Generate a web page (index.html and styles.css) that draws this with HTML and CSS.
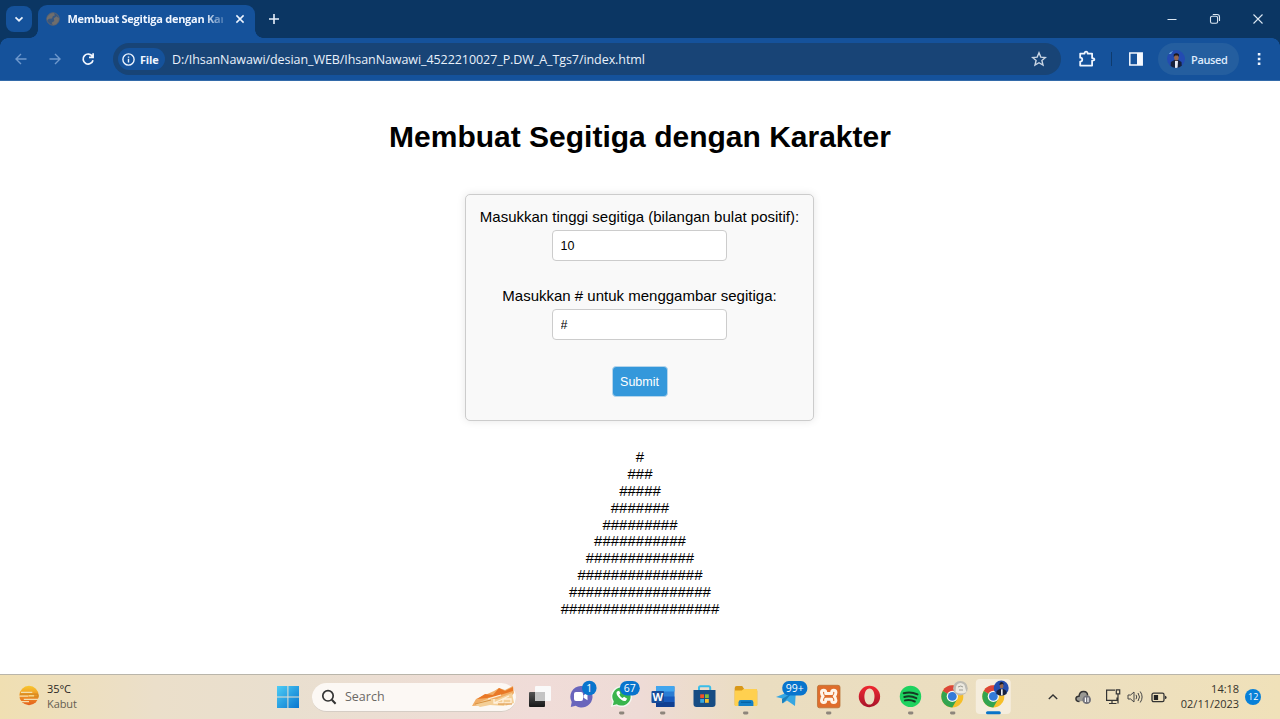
FILE: index.html
```html
<!DOCTYPE html>
<html lang="id">
<head>
<meta charset="utf-8">
<title>Membuat Segitiga dengan Karakter</title>
<link rel="stylesheet" href="styles.css">
</head>
<body>
<div class="screen">
  <header class="tabstrip">
    <div class="tab-search"><svg width="26" height="26" viewBox="0 0 26 26"><path d="M9.5 11.3l3.5 3.4 3.5-3.4" fill="none" stroke="#e8f0fb" stroke-width="1.7"/></svg></div>
    <div class="tab">
      <svg class="favicon" width="14" height="14" viewBox="0 0 14 14"><circle cx="7" cy="7" r="6.2" fill="#385780" stroke="#65656b" stroke-width="1"/><path d="M2 4Q4 .8 7.6 1L9 3.2 6.8 4.3 6 6.5 3 6.8 1.2 8.2.8 6zM7.8 6.2l2.8-2 2.5 2.2-.6 3-2.5 3-3.2.7-1.1-2.4 2.6-1.6z" fill="#706e6d"/></svg>
      <span class="tab-title">Membuat Segitiga dengan Kar</span>
      <svg class="tab-close" width="10" height="10" viewBox="0 0 10 10"><path d="M1.4 1.4l7.2 7.2M8.6 1.4L1.4 8.6" stroke="#edf4ff" stroke-width="1.5"/></svg>
    </div>
    <svg class="new-tab" width="12" height="12" viewBox="0 0 12 12"><path d="M6 1v10M1 6h10" stroke="#e8f0fa" stroke-width="1.6"/></svg>
    <div class="window-controls">
      <svg width="12" height="12" viewBox="0 0 12 12"><path d="M1.5 6.5h9" stroke="#dce7f2"/></svg>
      <svg width="12" height="12" viewBox="0 0 12 12"><rect x="1.5" y="3.2" width="7.1" height="7.1" rx="1.6" fill="none" stroke="#dce7f2" stroke-width="1.1"/><path d="M3.8 1.5h4.3q2.4 0 2.4 2.4v4.2" fill="none" stroke="#dce7f2" stroke-width="1.1"/></svg>
      <svg width="12" height="12" viewBox="0 0 12 12"><path d="M1.5 1.5l9 9M10.5 1.5l-9 9" stroke="#dce7f2" stroke-width="1.1"/></svg>
    </div>
  </header>

  <nav class="toolbar">
    <div class="nav-buttons">
      <svg width="14" height="14" viewBox="0 0 14 14"><path d="M12.5 7H2.2M7 2L2 7l5 5" fill="none" stroke="#6f99cd" stroke-width="1.4"/></svg>
      <svg width="14" height="14" viewBox="0 0 14 14"><path d="M1.5 7h10.3M7 2l5 5-5 5" fill="none" stroke="#6f99cd" stroke-width="1.4"/></svg>
      <svg width="14" height="14" viewBox="0 0 14 14"><path d="M11.4 4.4A5 5 0 1 0 12 8.2M12.1 1.2v4.1H8" fill="none" stroke="#f4f8ff" stroke-width="1.7"/></svg>
    </div>
    <div class="omnibox">
      <div class="file-chip"><svg width="13" height="13" viewBox="0 0 13 13"><circle cx="6.5" cy="6.5" r="5.6" fill="none" stroke="#eef5ff" stroke-width="1.4"/><path d="M6.5 5.8v3.6M6.5 3.4v1.3" stroke="#eef5ff" stroke-width="1.4"/></svg><span>File</span></div>
      <span class="url">D:/IhsanNawawi/desian_WEB/IhsanNawawi_4522210027_P.DW_A_Tgs7/index.html</span>
      <svg class="star" width="16" height="16" viewBox="0 0 16 16"><path d="M8 1.8l1.8 4.3 4.6.4-3.5 3 1.1 4.6L8 11.7 4 14.1l1.1-4.6-3.5-3 4.6-.4z" fill="none" stroke="#c9d5e3" stroke-width="1.4"/></svg>
    </div>
    <svg class="puzzle" width="18" height="18" viewBox="0 0 18 18"><path d="M2.2 3.6h4.4C6.3 1 9.9 1 9.6 3.6h4.5v4.5c3-.3 3 2.9 0 2.6v4.9H2.2v-4c2.6-.1 2.9-3.7 0-3.9z" fill="none" stroke="#f0f6ff" stroke-width="1.8" stroke-linejoin="round"/></svg>
    <i class="separator"></i>
    <svg class="side-panel" width="14" height="14" viewBox="0 0 14 14"><rect x=".8" y="1" width="12.4" height="12" fill="none" stroke="#f5f9ff" stroke-width="1.5"/><path d="M8 1h5.2v12H8z" fill="#f5f9ff"/></svg>
    <div class="profile">
      <svg width="18" height="18" viewBox="0 0 18 18"><defs><clipPath id="face"><circle cx="9" cy="9" r="9"/></clipPath></defs><g clip-path="url(#face)"><path fill="#234bb2" d="M0 0h18v18H0z"/><path d="M1 4q2-3 5-3L4 4z" fill="#68a4db"/><path d="M3.5 18l.4-6L7.3 10h3.8l3.4 2 .4 6z" fill="#17213b"/><path d="M8 11h3l-.4 7H8z" fill="#e7eaf4"/><ellipse cx="9.4" cy="7.5" rx="2.3" ry="3.1" fill="#95664f"/><path d="M6.7 7V4.5Q9.4 2 12 4.5V7l-1-1.6H8z" fill="#1c1820"/></g></svg>
      <span>Paused</span>
    </div>
    <svg class="menu" width="6" height="16" viewBox="0 0 6 16"><path d="M1.8 1.9h2.6v2.6H1.8zM1.8 6.7h2.6v2.6H1.8zM1.8 11.5h2.6v2.6H1.8z" fill="#eef5ff"/></svg>
  </nav>

  <main class="page">
    <h1 class="heading">Membuat Segitiga dengan Karakter</h1>
    <form class="card">
      <label class="label" for="tinggi">Masukkan tinggi segitiga (bilangan bulat positif):</label>
      <input class="field" id="tinggi" type="text" value="10">
      <label class="label" for="karakter">Masukkan # untuk menggambar segitiga:</label>
      <input class="field" id="karakter" type="text" value="#">
      <button class="submit" type="button">Submit</button>
    </form>
    <div class="triangle">#<br>###<br>#####<br>#######<br>#########<br>###########<br>#############<br>###############<br>#################<br>###################</div>
  </main>

  <footer class="taskbar">
    <div class="weather">
      <svg width="24" height="24" viewBox="0 0 24 24"><defs><linearGradient id="sun" x2="0" y2="1"><stop stop-color="#f8c72f"/><stop offset="1" stop-color="#e5601c"/></linearGradient></defs><circle cx="11" cy="10.5" r="9.7" fill="url(#sun)"/><path d="M3 7.4h11.3M0 11.1h10.3M5.8 14.3h15M0 16.7h11" stroke="#f3dfb0" stroke-width="1.3"/><path d="M2 9.1h18M12 11.8h8v-2.4" fill="none" stroke="#d38a22" stroke-width="1.2"/><path d="M10.6 10.8h5.5" stroke="#f9dc8e" stroke-width="1.4"/></svg>
      <div class="weather-text"><span>35°C</span><span class="condition">Kabut</span></div>
    </div>
    <svg class="start" width="22" height="22" viewBox="0 0 22 22"><defs><linearGradient id="win" x2="1" y2="1"><stop stop-color="#4dcdf5"/><stop offset="1" stop-color="#0875cf"/></linearGradient></defs><path d="M0 0h10.4v10.4H0zM11.4 0H22v10.4H11.4zM0 11.4h10.4V22H0zM11.4 11.4H22V22H11.4z" fill="url(#win)"/></svg>
    <div class="search">
      <svg width="16" height="16" viewBox="0 0 16 16"><circle cx="7" cy="6.8" r="5.2" fill="none" stroke="#333" stroke-width="1.7"/><path d="M10.8 10.7l3.8 4" stroke="#333" stroke-width="2"/></svg>
      <span>Search</span>
      <svg class="search-art" width="43" height="22" viewBox="0 0 43 22"><path d="M0 20L4 13 13 9 22 5l5-3 6 2 8-4 1 7-5 6-12 2-9 4z" fill="#f1ad65"/><path d="M5 13l8-5 8 1 6-7 6 3 8-4v4L28 9l-13 3z" fill="#e97826"/><path d="M3 18l12-5 10 0 15-6 2 10-9 3-15-1-10 2z" fill="#f4cf97"/><path d="M16 13l13-4M22 17l15-7M22 13v4h9v-4h8v4h-6v3" fill="none" stroke="#fff1dd" stroke-width="1.3"/><path d="M3 18l16-4M26 18h14" stroke="#d9913f"/></svg>
    </div>
    <div class="apps">
      <svg class="app" viewBox="0 0 41.3 45"><defs><linearGradient id="dark" x2="0" y2="1"><stop stop-color="#555"/><stop offset="1" stop-color="#181818"/></linearGradient></defs><rect x="16" y="12" width="16" height="15" rx="1" fill="#fafafa"/><rect x="10" y="18" width="16" height="15" rx="1" fill="url(#dark)"/><path d="M16 18h10v9H16z" fill="#c4c4c4"/></svg>
      <svg class="app" viewBox="0 0 41.3 45"><path d="M20.7 12a10.7 10.7 0 0 0-9 16l-.9 5 5-1.2A10.8 10.8 0 1 0 20.7 12z" fill="#6965bc"/><rect x="14" y="18" width="9" height="9" rx="2" fill="#fff"/><path d="M23.5 21.2l4-2.4v7.4l-4-2.4z" fill="#fff"/><circle cx="29.3" cy="14" r="7.3" fill="#0874cd"/><text x="29.3" y="18" class="badge">1</text></svg>
      <svg class="app" viewBox="0 0 41.3 45"><path d="M20.3 12a10.5 10.5 0 0 0-9 15.7L9.9 33l5.5-1.4A10.5 10.5 0 1 0 20.3 12z" fill="#f5f7f3"/><path d="M20.3 13.6a9 9 0 0 0-7.5 13.8l-1 3.8 4-1A9 9 0 1 0 20.3 13.6z" fill="#39b54c"/><path d="M16 17.5c-2.5 2.5 4.8 11 8.8 9.2l1.4-2-3.1-2-1.5 1.3q-2.3-.9-3.3-3.4l1.1-1.4-1.3-2.5z" fill="#fff"/><rect x="18.8" y="7" width="20" height="14.5" rx="7.2" fill="#0874cd"/><text x="28.8" y="18" class="badge">67</text><rect x="18" y="37.6" width="5.4" height="2.8" rx="1.4" class="running"/></svg>
      <svg class="app" viewBox="0 0 41.3 45"><rect x="14" y="12" width="18.5" height="21" rx="1.5" fill="#2b7cd3"/><path d="M14 12h18.5v5.5H14z" fill="#41a5ee"/><path d="M14 22.5h18.5V28H14z" fill="#185abd"/><path d="M14 28h18.5v5H14z" fill="#103f91"/><rect x="9.5" y="17" width="12.5" height="12" rx="1" fill="#174c99"/><text x="15.8" y="26.7" class="word">W</text><rect x="18" y="37.6" width="5.4" height="2.8" rx="1.4" class="running"/></svg>
      <svg class="app" viewBox="0 0 41.3 45"><path d="M15 17v-3.3q0-1.5 1.5-1.5h8.2q1.5 0 1.5 1.5V17" fill="none" stroke="#3abde9" stroke-width="2"/><path d="M9.5 16h22v14q0 3-3 3h-16q-3 0-3-3z" fill="#174c83"/><path d="M16.2 20.3h3.8v3.8h-3.8z" fill="#f35225"/><path d="M21 20.3h3.8v3.8H21z" fill="#81bc3a"/><path d="M16.2 25h3.8v3.8h-3.8z" fill="#35a8df"/><path d="M21 25h3.8v3.8H21z" fill="#f8bd2d"/></svg>
      <svg class="app" viewBox="0 0 41.3 45"><path d="M9.7 14q0-2 2-2h5.5l2 3h11q2 0 2 2v14H9.7z" fill="#d99818"/><path d="M9.7 16.5h7l2-1.5H31q1.2 0 1.2 1.2V32H9.7z" fill="#ffd04f"/><path d="M13.5 32v-3.5q0-2.4 2.4-2.4H26q2.4 0 2.4 2.4V32z" fill="#1480c7"/><path d="M16 28.3h10" stroke="#0763a5" stroke-width="1.3"/><rect x="18" y="37.6" width="5.4" height="2.8" rx="1.4" class="running"/></svg>
      <svg class="app" viewBox="0 0 41.3 45"><path d="M10 23l20-8-1 17-8-5.500-4 2.800-.7-4.700z" fill="#35a6e2"/><path d="M16 25l10-6-6.500 7.500-3.400 3z" fill="#1c7fbb"/><rect x="16.300" y="7" width="25" height="14.500" rx="6.500" fill="#0874cd"/><text x="28.800" y="18" class="badge">99+</text></svg>
      <svg class="app" viewBox="0 0 41.3 45"><rect x="9.500" y="11.300" width="22.500" height="22.500" rx="2" fill="#df6d2c" stroke="#b97035" stroke-width=".8"/><path d="M13.500 18.500q0-2.200 2.200-2.200 2 0 2 2v1.200h6v-1.200q0-2 2-2 2.200 0 2.200 2.200 0 2.400-1.600 3.900 1.600 1.500 1.600 3.900 0 2.200-2.200 2.200-2 0-2-2v-1.200h-6v1.200q0 2-2 2-2.200 0-2.200-2.200 0-2.400 1.600-3.900-1.600-1.500-1.600-3.900z" fill="none" stroke="#fff5e9" stroke-width="3" stroke-linejoin="round"/><rect x="18" y="37.600" width="5.400" height="2.800" rx="1.400" class="running"/></svg>
      <svg class="app" viewBox="0 0 41.3 45"><defs><linearGradient id="opera" x2="0" y2="1"><stop stop-color="#ef2931"/><stop offset="1" stop-color="#a81329"/></linearGradient></defs><path fill-rule="evenodd" d="M20.5 11.8a10.7 10.7 0 1 1-.1 21.4 10.7 10.7 0 0 1 .1-21.4m0 2.6c-6.7 0-6.7 16.2 0 16.2s6.7-16.2 0-16.2" fill="url(#opera)"/></svg>
      <svg class="app" viewBox="0 0 41.3 45"><circle cx="20.5" cy="22.4" r="10.7" fill="#1ed25f"/><path d="M13.7 19.2q7-2.1 13.8 1.2M14.3 23q6.2-1.7 12 1.2M15 26.4q5-1.3 9.8 1.1" fill="none" stroke="#153b24" stroke-width="2" stroke-linecap="round"/><rect x="18" y="37.6" width="5.4" height="2.8" rx="1.4" class="running"/></svg>
      <svg class="app" viewBox="0 0 41.3 45"><g id="chrome"><circle cx="20.3" cy="22.4" r="11" fill="#f6bf28"/><path d="M20.3 22.4L10.8 16.9a11 11 0 0 1 19.1 0z" fill="#dc4538"/><path d="M20.3 22.4L10.8 16.9a11 11 0 0 0 9.5 16.5l4.6-8z" fill="#32a450"/><circle cx="20.3" cy="22.4" r="5.6" fill="#f8faf5"/><circle cx="20.3" cy="22.4" r="4.4" fill="#347bd8"/></g><circle cx="28.4" cy="14.2" r="7.3" fill="#bdbbb2"/><path d="M24 13q1-4 5-4 4 1 4 4l1.500 5q-5 3-11 0z" fill="#ece9df"/><path d="M26 13q3-2 5 0M27 16h4" fill="none" stroke="#9b9a90"/><rect x="18" y="37.6" width="5.4" height="2.8" rx="1.4" class="running"/></svg>
      <svg class="app" viewBox="0 0 41.3 45"><rect x="2.8" y="5" width="35" height="35" rx="4" fill="#f5eddd"/><use href="#chrome"/><circle cx="28.2" cy="14" r="7.5" fill="#244eaf"/><path d="M23.5 20v-3l3-2h4l3 2v3q-5 3-10 0z" fill="#17223e"/><ellipse cx="28.6" cy="12" rx="1.9" ry="2.6" fill="#93674f"/><path d="M26.4 11q0-3 2.5-3 2 .3 2 3l-1-1.2z" fill="#181a26"/><path d="M28 15.3h1.7v6H28z" fill="#eee"/><rect x="13" y="37.3" width="14.8" height="3" rx="1.5" fill="#0874c8"/></svg>
    </div>
    <div class="tray">
      <svg width="10" height="8" viewBox="0 0 10 8"><path d="M.8 6L5 2l4.2 4" fill="none" stroke="#333" stroke-width="1.4"/></svg>
      <svg class="cloud" width="17" height="15" viewBox="0 0 17 15"><path d="M4 11.5C-.5 11.2.2 6 4 6.2 5-.5 12.5.8 12.6 5.5 15.3 5 16 8 14.7 10z" fill="#9b9a94"/><path d="M4.500 11.5C-.5 11.2.2 6 4 6.2 5-.5 12.5.8 12.6 5.500" fill="none" stroke="#333" stroke-width="1.5"/><circle cx="11.7" cy="9.700" r="4.300" fill="#73737a"/><path d="M10.4 7.500v4.400M13 7.500v4.400" stroke="#fff" stroke-width="1.2"/></svg>
      <svg class="network" width="17" height="18" viewBox="0 0 17 18"><path d="M10 2.2H1.6v10.2H12V9.5M7 12.4v3.1M4 15.5h7.5M11.300 1.800h3.400v4h-3.400zM13 5.800v9.700" fill="none" stroke="#343434" stroke-width="1.2"/></svg>
      <svg class="volume" width="17" height="14" viewBox="0 0 17 14"><path d="M1 5v4h2.6L7 12V2L3.6 5z" fill="none" stroke="#464646"/><path d="M9 4.8q1.5 2.2 0 4.4M11 3q3 4 0 8M13.2 1.5q3.8 5.5 0 11" fill="none" stroke="#464646"/></svg>
      <svg class="battery" width="16" height="11" viewBox="0 0 16 11"><rect x="1" y="1.2" width="12" height="8.5" rx="1.6" fill="none" stroke="#333" stroke-width="1.3"/><path d="M2.800 3h4.300v5H2.800z" fill="#222"/><path d="M14 3.800q1.600 0 1.600 1.600T14 7z" fill="#333"/></svg>
      <div class="clock"><span class="time">14:18</span><span class="date">02/11/2023</span></div>
      <div class="notifications">12</div>
    </div>
  </footer>
</div>
</body>
</html>
```
FILE: styles.css
```css
* { box-sizing: border-box; }
body { margin: 0; }
svg { display: block; flex: none; }
span { white-space: nowrap; }

.screen {
  width: 1280px;
  height: 719px;
  display: flex;
  flex-direction: column;
  overflow: hidden;
  background: #fff;
  font-family: "Open Sans", "Noto Sans", sans-serif;
}

/* Browser chrome */
.tabstrip {
  height: 38px;
  flex: none;
  display: flex;
  align-items: center;
  padding-left: 6px;
  background: #0b3663;
}
.tab-search {
  width: 26px;
  height: 26px;
  margin-right: 6px;
  border-radius: 8px;
  background: #15529b;
}
.tab {
  position: relative;
  width: 217px;
  height: 33px;
  align-self: flex-end;
  display: flex;
  align-items: center;
  padding: 0 10px 5px 8px;
  border-radius: 9px 9px 0 0;
  background: #15529b;
}
.tab::before, .tab::after {
  content: "";
  position: absolute;
  bottom: 0;
  width: 8px;
  height: 8px;
}
.tab::before { left: -8px; background: radial-gradient(circle at 0 0, transparent 7.5px, #15529b 8px); }
.tab::after { right: -8px; background: radial-gradient(circle at 100% 0, transparent 7.5px, #15529b 8px); }
.favicon { margin-right: 7.5px; }
.tab-title {
  width: 155px;
  margin-right: 12.5px;
  color: #f0f6ff;
  font-size: 11px;
  line-height: 16px;
  font-weight: 700;
  letter-spacing: -.26px;
  -webkit-mask-image: linear-gradient(90deg, #000 136px, rgba(0, 0, 0, .2) 156px);
  mask-image: linear-gradient(90deg, #000 136px, rgba(0, 0, 0, .2) 156px);
}
.new-tab { margin-left: 12.5px; }
.window-controls {
  display: flex;
  gap: 31px;
  margin-left: auto;
  padding-right: 16px;
}
.toolbar {
  height: 43px;
  flex: none;
  display: flex;
  align-items: center;
  padding-left: 14px;
  border-bottom: 1px solid #336aa9;
  background:
    radial-gradient(circle at 0 100%, #15529b 7.5px, #0b3663 8px) right top / 8px 8px no-repeat,
    radial-gradient(circle at 100% 100%, #15529b 7.5px, #0b3663 8px) left top / 8px 8px no-repeat,
    #15529b;
}
.nav-buttons { display: flex; gap: 19.5px; }
.omnibox {
  width: 948px;
  height: 32px;
  display: flex;
  align-items: center;
  margin-left: 18px;
  padding: 0 14px 0 5px;
  border-radius: 16px;
  background: #184476;
}
.file-chip {
  width: 47px;
  height: 22px;
  display: flex;
  align-items: center;
  gap: 5px;
  padding-left: 4px;
  border-radius: 11px;
  background: #15529b;
  color: #f0f6ff;
  font-size: 11px;
  font-weight: 700;
  letter-spacing: -.2px;
}
.url {
  margin-left: 7px;
  color: #e9f1fb;
  font-size: 12.5px;
  letter-spacing: -.07px;
}
.star { margin-left: auto; }
.puzzle { margin-left: 16.5px; }
.separator { width: 1px; height: 14px; margin-left: 15px; background: #0e3b6e; }
.side-panel { margin-left: 17.5px; }
.profile {
  width: 81px;
  height: 32px;
  display: flex;
  align-items: center;
  gap: 6px;
  margin-left: 15px;
  padding-left: 9px;
  border-radius: 16px;
  background: #245e9f;
  color: #dfebfc;
  font-size: 11px;
  font-weight: 600;
  letter-spacing: -.35px;
}
.menu { margin-left: 17px; }

/* Document */
.page {
  height: 593px;
  flex: none;
  display: flex;
  flex-direction: column;
  align-items: center;
  color: #000;
  font-family: "Liberation Sans", Arial, sans-serif;
}
.heading {
  margin: 38px 0 40px;
  font-size: 30px;
  line-height: 35px;
  font-weight: 700;
  white-space: nowrap;
}
.card {
  width: 349px;
  height: 227px;
  display: flex;
  flex-direction: column;
  align-items: center;
  margin-right: 1px;
  padding-top: 13px;
  border: 1px solid #ccc;
  border-radius: 5px;
  background: #f9f9f9;
  box-shadow: 0 0 9px rgba(0, 0, 0, .1);
}
.label { font-size: 15px; line-height: 18px; margin-bottom: 4px; white-space: nowrap; }
.field {
  width: 175px;
  height: 31px;
  margin: 0 1px 26px 0;
  padding: 0 8px;
  border: 1px solid #ccc;
  border-radius: 4px;
  background: #fff;
  color: #000;
  font: 12.5px "Liberation Sans", Arial, sans-serif;
}
.submit {
  width: 56px;
  height: 31px;
  padding: 0;
  border: 1px solid #b5d5eb;
  border-radius: 4px;
  background: #3498db;
  color: #fff;
  font: 12.5px "Liberation Sans", Arial, sans-serif;
}
.triangle {
  margin-top: 28px;
  font-size: 15px;
  line-height: 16.87px;
  text-align: center;
}

/* Taskbar */
.taskbar {
  height: 45px;
  flex: none;
  display: flex;
  align-items: center;
  border-top: 1px solid #b9b5aa;
  background: linear-gradient(90deg, #f0dfb2 0, #ebdfca 155px, #e9dfcf 290px, #f0dcd8 535px, #eedbd6 640px, #eaddc0 760px, #ecdfc0 1060px, #f0e1b9 1280px);
}
.weather { width: 277px; display: flex; align-items: center; padding-left: 18px; gap: 5px; }
.weather-text { display: flex; flex-direction: column; padding-bottom: 2px; font-size: 11px; line-height: 15px; letter-spacing: -.1px; color: #282724; }
.condition { color: #666052; }
.start { margin-right: 13px; }
.search {
  width: 204px;
  height: 29px;
  display: flex;
  align-items: center;
  margin-right: 2.6px;
  padding-left: 9px;
  border-radius: 15px;
  border-bottom: 1px solid #d5cdc5;
  background: #fcf8f4;
  color: #6b6865;
  font-size: 12.5px;
}
.search span { margin-left: 8px; }
.search-art { margin-left: auto; margin-right: 1px; }
.apps { display: flex; }
.app { width: 41.3px; height: 45px; margin-top: -1px; overflow: visible; }
.badge { fill: #fff; font-size: 10.5px; text-anchor: middle; }
.word { fill: #fff; font-size: 11px; font-weight: 700; text-anchor: middle; }
.running { fill: #8d857b; }
.tray { flex: 1; display: flex; align-items: center; padding-left: 34px; }
.cloud { margin-left: 17px; }
.network { margin-left: 13px; }
.volume { margin-left: 5px; }
.battery { margin-left: 7px; }
.clock { width: 59px; display: flex; flex-direction: column; align-items: flex-end; margin-left: 13px; padding-bottom: 2px; color: #36332c; font-size: 11px; line-height: 15px; }
.notifications {
  width: 16px;
  height: 16px;
  margin-left: 6px;
  border-radius: 50%;
  background: #0880d8;
  color: #fff;
  font-size: 9px;
  line-height: 16px;
  text-align: center;
}
```
